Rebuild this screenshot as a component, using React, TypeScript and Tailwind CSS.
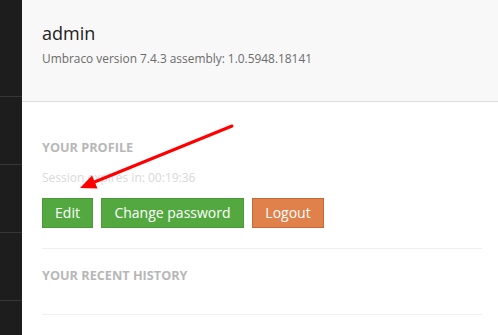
import React from "react";

export default function App() {
  const font = { fontFamily: '"Open Sans", "Noto Sans", sans-serif' };
  return (
    <div className="relative flex w-[498px] h-[335px] overflow-hidden bg-white" style={font}>
      <div className="w-[22px] shrink-0 bg-[#1d1d1d] flex flex-col">
        <div className="h-[97px] border-b border-[#363636]" />
        <div className="h-[68px] border-b border-[#363636]" />
        <div className="h-[68px] border-b border-[#363636]" />
        <div className="h-[68px] border-b border-[#363636]" />
        <div className="flex-1" />
      </div>
      <div className="flex-1 flex flex-col">
        <div className="h-[102px] bg-[#f8f8f8] border-b border-[#dddddd] px-[20px] pt-[21px]">
          <div className="text-[18px] leading-[24px] text-[#222]">admin</div>
          <div className="mt-[5px] text-[11.9px] leading-[16px] text-[#6b6b6b]">
            Umbraco version 7.4.3 assembly: 1.0.5948.18141
          </div>
        </div>
        <div className="pl-[20px] pr-[16px]">
          <div className="mt-[37px] text-[12.7px] leading-[16px] font-bold text-[#b7b7b7]">YOUR PROFILE</div>
          <div className="mt-[15px] text-[12px] leading-[16px] text-[#d9d9d9]">Session expires in: 00:19:36</div>
          <div className="mt-[12px] flex gap-[8px]">
            <button className="h-[30px] w-[51px] bg-[#53a93f] border border-[#4a9a37] text-white text-[14px] leading-[28px]">
              Edit
            </button>
            <button className="h-[30px] w-[143px] bg-[#53a93f] border border-[#4a9a37] text-white text-[14px] leading-[28px]">
              Change password
            </button>
            <button className="h-[30px] w-[72px] bg-[#e0804a] border border-[#c56a37] text-white text-[14px] leading-[28px]">
              Logout
            </button>
          </div>
          <div className="mt-[20px] border-t border-[#f0f0f0]" />
          <div className="mt-[18px] text-[12.7px] leading-[16px] font-bold text-[#b7b7b7]">YOUR RECENT HISTORY</div>
          <div className="mt-[31px] border-t border-[#f0f0f0]" />
        </div>
      </div>
      <svg className="absolute inset-0 pointer-events-none" width="498" height="335" viewBox="0 0 498 335">
        <line x1="232" y1="126" x2="92" y2="183" stroke="#ff0000" strokeWidth="3" strokeLinecap="round" />
        <polygon points="80,188 92,175.5 97.5,188.5" fill="#ff0000" />
      </svg>
    </div>
  );
}
